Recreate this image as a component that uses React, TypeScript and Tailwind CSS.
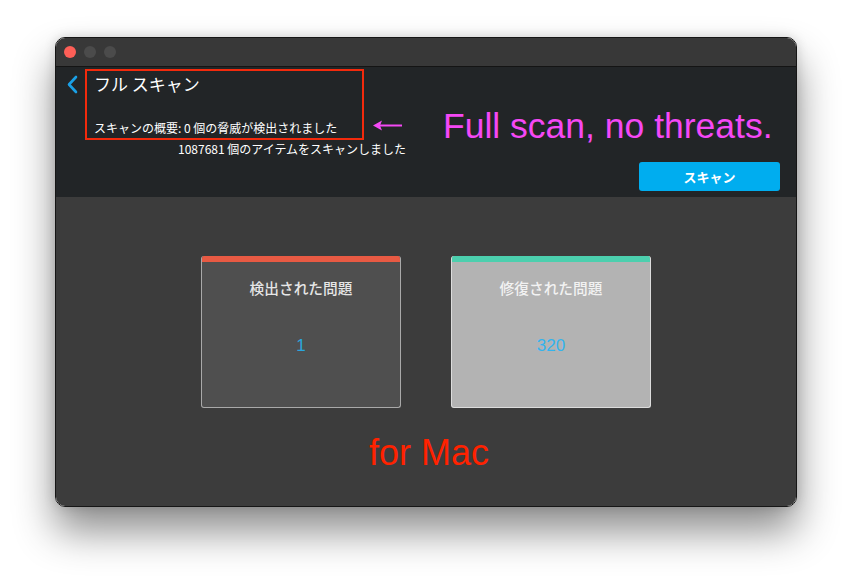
import React from "react";

const jp = "font-['Hiragino_Sans','Noto_Sans_CJK_JP',sans-serif]";

export default function App() {
  return (
    <div className="w-[852px] h-[581px] bg-white overflow-hidden pl-[55px] pt-[37px]">
      <div className="w-[742px] h-[470px] rounded-[10px] border border-[#161616] overflow-hidden flex flex-col shadow-[0_24px_40px_rgba(0,0,0,0.45),0_0_12px_rgba(0,0,0,0.15)]">
        {/* title bar */}
        <div className="h-[29px] shrink-0 bg-[#383838] border-b border-[#141414] flex items-start pl-[8px] pt-[8px] gap-[8px]">
          <div className="w-[12px] h-[12px] rounded-full bg-[#fe5f57]" />
          <div className="w-[12px] h-[12px] rounded-full bg-[#4b4b4b]" />
          <div className="w-[12px] h-[12px] rounded-full bg-[#4b4b4b]" />
        </div>

        {/* header */}
        <div className="h-[130px] shrink-0 bg-[#222527] flex flex-col">
          <div className="h-[74px] flex items-start shrink-0">
            <svg className="ml-[10px] mt-[8px]" width="12" height="19" viewBox="0 0 12 19">
              <polyline points="10,2 3,9.5 10,17" fill="none" stroke="#1aa0e6" strokeWidth="2.6" strokeLinecap="round" strokeLinejoin="round" />
            </svg>
            <div className={`ml-[7px] mt-[2px] w-[279px] h-[71px] border-2 border-[#f32a0c] flex flex-col pl-[7px] ${jp} text-white`}>
              <div className="pt-[1px] text-[17px] leading-[24px]">フル スキャン</div>
              <div className="mt-[24px] text-[12px] leading-[16px]">スキャンの概要: 0 個の脅威が検出されました</div>
            </div>
            <svg className="ml-[9px] mt-[53px]" width="30" height="11" viewBox="0 0 30 11">
              <line x1="5" y1="5.5" x2="29" y2="5.5" stroke="#f449f4" strokeWidth="2" />
              <polygon points="0,5.5 9,0.5 7,5.5 9,10.5" fill="#f449f4" />
            </svg>
            <div className="ml-[40px] mt-[41px] text-[35.5px] leading-[36px] text-[#f548f5] font-['Liberation_Sans',Arial,sans-serif] whitespace-nowrap">
              Full scan, no threats.
            </div>
          </div>
          <div className={`pl-[122px] text-[12px] leading-[16px] text-white ${jp}`}>
            1087681 個のアイテムをスキャンしました
          </div>
          <div className="mt-auto pb-[6px] pr-[16px] flex justify-end">
            <div className={`w-[141px] h-[29px] rounded-[3px] bg-[#00adef] flex items-center justify-center text-white font-bold text-[13px] ${jp}`}>
              スキャン
            </div>
          </div>
        </div>

        {/* body */}
        <div className="flex-1 bg-[#3c3c3c] flex flex-col items-center pt-[59px]">
          <div className="flex gap-[50px]">
            <div className="w-[200px] h-[152px] rounded-[3px] overflow-hidden bg-[#4f4f4f] border border-t-0 border-[#a9a9a9] flex flex-col items-center">
              <div className="h-[6px] w-full bg-[#e85a43] shrink-0" />
              <div className={`mt-[16px] text-[14.7px] leading-[20px] font-medium text-[#e6e6e6] ${jp}`}>検出された問題</div>
              <div className="mt-[36px] text-[17px] leading-[24px] text-[#2aa6de] font-['Liberation_Sans',Arial,sans-serif]">1</div>
            </div>
            <div className="w-[200px] h-[152px] rounded-[3px] overflow-hidden bg-[#b3b3b3] border border-t-0 border-[#dcdcdc] flex flex-col items-center">
              <div className="h-[6px] w-full bg-[#4ccfae] shrink-0" />
              <div className={`mt-[16px] text-[14.7px] leading-[20px] font-medium text-[#f2f2f2] ${jp}`}>修復された問題</div>
              <div className="mt-[36px] text-[17px] leading-[24px] text-[#33b4ee] font-['Liberation_Sans',Arial,sans-serif]">320</div>
            </div>
          </div>
          <div className="mt-[27px] ml-[6px] text-[36px] leading-[36px] text-[#ff2200] font-['Liberation_Sans',Arial,sans-serif]">
            for Mac
          </div>
        </div>
      </div>
    </div>
  );
}
